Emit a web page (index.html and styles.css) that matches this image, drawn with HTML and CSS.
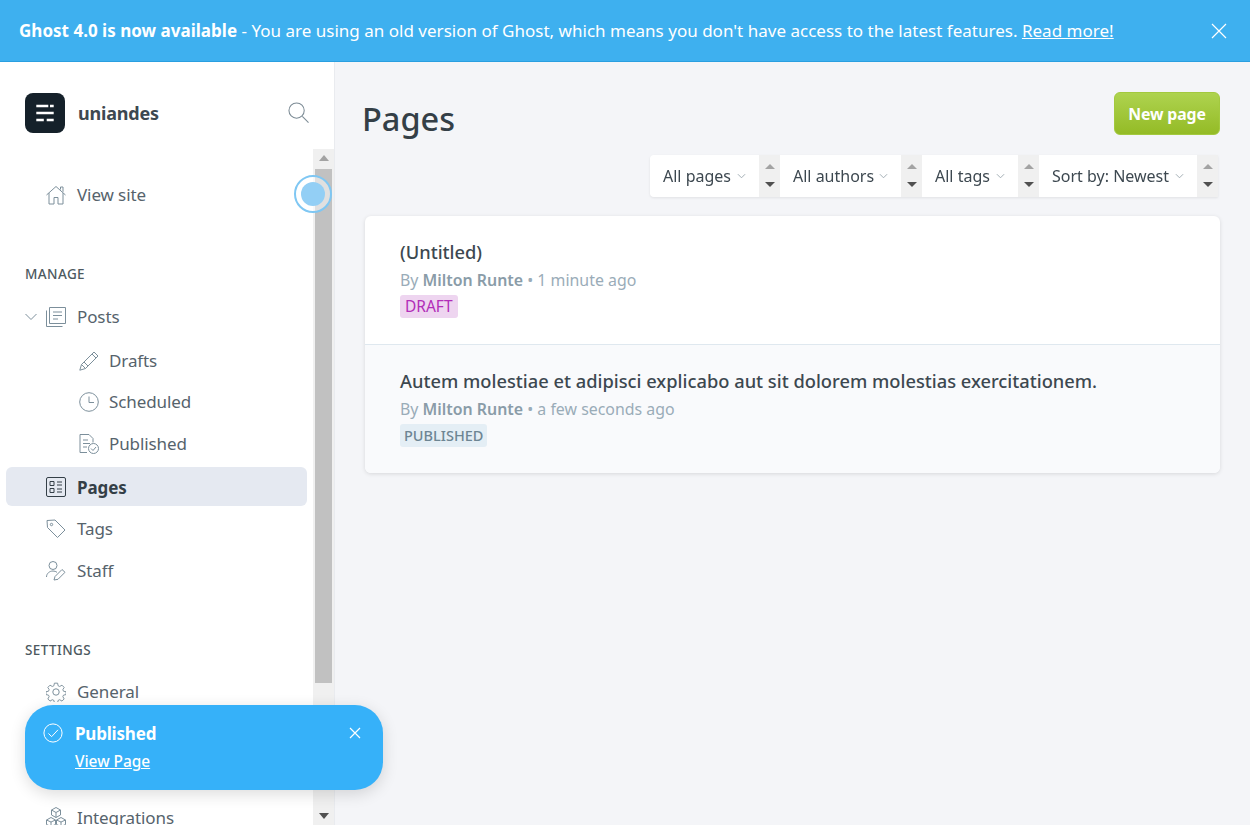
FILE: index.html
```html
<!DOCTYPE html>
<html lang="en">
<head>
<meta charset="utf-8">
<title>Pages - uniandes</title>
<link rel="stylesheet" href="styles.css">
</head>
<body>
<div class="banner">
  <p class="banner-text"><b>Ghost 4.0 is now available</b> - You are using an old version of Ghost, which means you don't have access to the latest features. <a href="#">Read more!</a></p>
  <svg class="banner-close" viewBox="0 0 16 16"><path d="M1 1l14 14M15 1L1 15"/></svg>
</div>
<div class="app">
  <aside class="sidebar">
    <div class="brand">
      <div class="logo"><svg viewBox="0 0 40 40"><path d="M11.300 13h12M25 13h3.700M11.300 20h17.400M11.300 27h7.500M21.700 27h7"/></svg></div>
      <span class="brand-name">uniandes</span>
      <svg class="search" viewBox="0 0 22 22"><circle cx="9" cy="9" r="8"/><path d="M15 15l6.500 6.500"/></svg>
    </div>
    <div class="scroller">
      <nav class="nav">
        <a class="item view-site" href="#"><svg class="icon" viewBox="0 0 20 20"><path d="M.5 10L10 1.500 19.500 10M3 8v11h5v-6.500h4V19h5V8M14.500 4.500V2h2.500v4.800"/></svg>View site</a>
        <h3 class="section manage">MANAGE</h3>
        <a class="item posts" href="#"><svg class="caret" viewBox="0 0 12 8"><path d="M.5 1L6 6.500 11.500 1"/></svg><svg class="icon" viewBox="0 0 20 20"><path d="M3.500.5h16v16h-16zM.5 3.500v16h16M7 5h9M7 8.500h9M7 12h5"/></svg>Posts</a>
        <a class="item sub drafts" href="#"><svg class="icon" viewBox="0 0 20 20"><path d="M15 1l4 4L6.500 17.500.8 19.200 2.500 13.500zM13 3l4 4M2.500 13.500l4 4M5 11l4 4"/></svg>Drafts</a>
        <a class="item sub sched" href="#"><svg class="icon" viewBox="0 0 20 20"><circle cx="10" cy="10" r="9.300"/><path d="M10 4.500V10.500h5"/></svg>Scheduled</a>
        <a class="item sub pub" href="#"><svg class="icon" viewBox="0 0 20 20"><path d="M8 18.500H1V.5h9l4 4v4M4 6h5M4 9.500h7M4 13h4"/><circle cx="14.500" cy="14.500" r="5"/><path d="M12 14.500l2 2 3-3.500"/></svg>Published</a>
        <a class="item active" href="#"><svg class="icon" viewBox="0 0 20 20"><rect x=".5" y=".5" width="19" height="19" rx="1.500"/><path d="M4 4.500h4v4H4zM4 11.500h4v4H4zM11 5h5M11 8h5M11 12h5M11 15h5"/></svg>Pages</a>
        <a class="item tags" href="#"><svg class="icon" viewBox="0 0 20 20"><path d="M1 1.500l8-.5 10 10-7.500 7.500-10-10z"/><circle cx="5.500" cy="5.500" r="1.200"/></svg>Tags</a>
        <a class="item staff" href="#"><svg class="icon" viewBox="0 0 20 20"><circle cx="7" cy="4.500" r="4"/><path d="M.5 16c0-3.500 3-6 6.500-6 1.500 0 3 .5 4 1.300M8 19l1-3.500 7-7 3 2.800-7 7z"/></svg>Staff</a>
        <h3 class="section settings">SETTINGS</h3>
        <a class="item general" href="#"><svg class="icon" viewBox="0 0 20 20"><circle cx="10" cy="10" r="3.200"/><path d="M8.300.7h3.400l.5 2.700 1.700.8 2.400-1.400 2.300 2.400-1.400 2.300.7 1.700 2.700.5v3l-2.700.6-.7 1.600 1.400 2.400-2.300 2.300-2.400-1.500-1.700.8-.5 2.600H8.300l-.5-2.600-1.700-.8-2.400 1.500-2.300-2.300 1.400-2.400-.7-1.600-2.700-.6v-3l2.700-.5.7-1.700-1.400-2.300L3.700 2.800l2.400 1.400 1.700-.8z" transform="translate(.5 .5) scale(.95)"/></svg>General</a>
        <div class="under-toast"></div>
        <a class="item integrations" href="#"><svg class="icon" viewBox="0 0 20 20"><path d="M10 .5l4.500 2.500v5L10 10.500 5.500 8V3zM5.500 3L10 5.500 14.500 3M10 5.500v5M5 10.500l4.500 2.500v4.500L5 19.500.5 17.500V13zM.5 13L5 15l4.500-2M5 15v4.500M15 10.500l4.500 2.500v4.500L15 19.500l-4.500-2V13zM10.500 13l4.500 2 4.500-2M15 15v4.500"/></svg>Integrations</a>
      </nav>
      <div class="scrollbar">
        <svg class="sb-arrow" viewBox="0 0 10 6"><path d="M5 0l5 6H0z"/></svg>
        <div class="sb-thumb"></div>
        <svg class="sb-arrow dark" viewBox="0 0 10 6"><path d="M0 0h10L5 6z"/></svg>
      </div>
    </div>
    <div class="focus-ring"><span></span></div>
  </aside>
  <main class="main">
    <header class="head">
      <h1>Pages</h1>
      <a class="new-page" href="#">New page</a>
    </header>
    <div class="filters">
      <div class="filter f1"><span>All pages</span><svg viewBox="0 0 10 6"><path d="M1 1l4 4 4-4"/></svg></div>
      <div class="spin"><i class="up"></i><i class="down"></i></div>
      <div class="filter f2"><span>All authors</span><svg viewBox="0 0 10 6"><path d="M1 1l4 4 4-4"/></svg></div>
      <div class="spin"><i class="up"></i><i class="down"></i></div>
      <div class="filter f3"><span>All tags</span><svg viewBox="0 0 10 6"><path d="M1 1l4 4 4-4"/></svg></div>
      <div class="spin"><i class="up"></i><i class="down"></i></div>
      <div class="filter f4"><span>Sort by: Newest</span><svg viewBox="0 0 10 6"><path d="M1 1l4 4 4-4"/></svg></div>
      <div class="spin"><i class="up"></i><i class="down"></i></div>
    </div>
    <section class="list">
      <article class="row">
        <h2>(Untitled)</h2>
        <p class="meta">By <b>Milton Runte</b> • 1 minute ago</p>
        <span class="tag draft">DRAFT</span>
      </article>
      <article class="row alt">
        <h2>Autem molestiae et adipisci explicabo aut sit dolorem molestias exercitationem.</h2>
        <p class="meta">By <b>Milton Runte</b> • a few seconds ago</p>
        <span class="tag published">PUBLISHED</span>
      </article>
    </section>
  </main>
</div>
<div class="toast">
  <svg class="toast-check" viewBox="0 0 22 22"><circle cx="11" cy="11" r="10"/><path d="M6 11.500l3.500 3.500 7-7.500"/></svg>
  <div class="toast-body">
    <strong>Published</strong>
    <a href="#">View Page</a>
  </div>
  <svg class="toast-close" viewBox="0 0 12 12"><path d="M1 1l10 10M11 1L1 11"/></svg>
</div>
</body>
</html>
```
FILE: styles.css
```css
* { box-sizing: border-box; }
html, body { margin: 0; height: 100%; overflow: hidden; }
body { font-family: "Noto Sans", "Open Sans", sans-serif; color: #3d4850; background: #f4f5f8; }
a { color: inherit; text-decoration: none; }
svg { fill: none; stroke: currentColor; stroke-width: 1; flex: none; }

.banner { height: 62px; background: #3eb0ef; border-bottom: 1px solid #2a9fe0; color: #fff; display: flex; align-items: center; padding: 0 23px 0 19px; justify-content: space-between; }
.banner-text { margin: 0; font-size: 17px; letter-spacing: .015px; }
.banner-text a { text-decoration: underline; }
.banner-close { width: 16px; height: 16px; stroke-width: 1.200; }

.app { display: flex; height: 763px; }
.sidebar { position: relative; width: 335px; flex: none; background: #fff; border-right: 1px solid #e9ebef; display: flex; flex-direction: column; }
.brand { height: 87px; flex: none; display: flex; align-items: center; padding: 14px 25px 0; }
.logo { width: 40px; height: 40px; border-radius: 8px; background: #15212a; color: #fff; margin-right: 13px; }
.logo svg { display: block; width: 40px; height: 40px; stroke-width: 2.600; }
.brand-name { font-size: 18px; font-weight: 700; color: #3d4850; flex: 1; letter-spacing: -.2px; }
.search { width: 21px; height: 21px; color: #7c8b95; stroke-width: 1.100; }

.scroller { flex: 1; min-height: 0; display: flex; }
.nav { flex: 1; min-width: 0; overflow: hidden; padding: 26px 6px 0; }
.item { display: flex; align-items: center; height: 39px; padding-left: 40px; font-size: 17px; color: #56636c; border-radius: 6px; margin-top: 2.700px; letter-spacing: -.1px; }
.view-site { margin-top: 0; }
.icon { width: 20px; height: 20px; margin-right: 11px; color: #7c8f9b; }
.caret { width: 12px; height: 8px; color: #7c8f9b; position: absolute; left: 25px; }
.sub { padding-left: 73px; }
.sub .icon { margin-right: 10px; }
.posts { margin-top: 0; }
.drafts { margin-top: 5px; }
.sched { margin-top: 2px; }
.pub { margin-top: 3px; }
.active { background: #e5e9f1; color: #343f47; font-weight: 700; margin-top: 4px; padding-top: 1px; }
.active .icon { color: #343f47; }
.tags { margin-top: 3px; }
.staff { margin-top: 3px; }
.section { margin: 0; font-size: 13.500px; font-weight: 500; color: #4d5960; padding-left: 19px; letter-spacing: .4px; line-height: 18px; }
.manage { margin-top: 51px; margin-bottom: 14px; }
.settings { margin-top: 51px; margin-bottom: 13px; }
.under-toast { height: 84px; }

.scrollbar { width: 21px; flex: none; background: #f0f0f0; display: flex; flex-direction: column; align-items: center; justify-content: space-between; position: relative; }
.sb-arrow { width: 10px; height: 6px; fill: #a3a3a3; stroke: none; margin: 6px 0 7px; }
.sb-arrow.dark { fill: #505050; margin: 7px 0 6px; }
.sb-thumb { width: 17px; height: 514px; background: #c1c1c1; margin-bottom: 123px; }

.focus-ring { position: absolute; left: 294px; top: 113px; width: 38px; height: 38px; border-radius: 50%; border: 2px solid #7fc7f3; padding: 5px; background: rgba(255,255,255,.5); }
.focus-ring span { display: block; width: 24px; height: 24px; border-radius: 50%; background: #93cff5; }

.main { flex: 1; min-width: 0; padding: 30px 30px 0 27px; }
.head { display: flex; justify-content: space-between; align-items: flex-start; }
.head h1 { margin: 5px 0 0; font-size: 32.500px; line-height: 44px; font-weight: 500; color: #343f47; }
.new-page { width: 106px; height: 43px; border-radius: 6px; background: linear-gradient(#aed34f, #94bb26); border: 1px solid #a3c93f; color: #fff; font-weight: 700; font-size: 15.800px; display: flex; align-items: center; justify-content: center; letter-spacing: -.1px; }

.filters { display: flex; justify-content: flex-end; margin: 14px 2px 0 0; height: 43px; filter: drop-shadow(0 1px 1px rgba(0,0,0,.08)); }
.filter { display: flex; align-items: center; justify-content: space-between; flex: none; white-space: nowrap; background: #fff; font-size: 16px; color: #3d4850; padding: 0 13px; height: 42px; }
.filter svg { width: 9px; height: 6px; color: #9aa6ad; }
.f1 { width: 109px; border-radius: 4px 0 0 4px; }
.f2 { width: 121px; }
.f3 { width: 96px; }
.f4 { width: 158px; }
.spin { width: 21px; height: 42px; background: #f0f0f0; display: flex; flex-direction: column; align-items: center; justify-content: space-between; padding: 9px 0 10px; }
.spin i { width: 0; height: 0; border-left: 5px solid transparent; border-right: 5px solid transparent; }
.spin .up { border-bottom: 5px solid #a3a3a3; }
.spin .down { border-top: 5px solid #505050; }

.list { margin: 18px 0 0 3px; background: #fff; border-radius: 6px; box-shadow: 0 1px 4px rgba(0,0,0,.12); overflow: hidden; }
.row { height: 128px; padding: 21px 35px 0; }
.row.alt { height: 129px; background: #f9fafc; border-top: 1px solid #dfe8ef; }
.row h2 { margin: 0; font-size: 18.300px; line-height: 30px; font-weight: 500; color: #3d4850; }
.meta { margin: 1px 0 0; font-size: 15.900px; line-height: 24px; color: #9aacb8; }
.meta b { color: #8a9ca8; font-weight: 600; }
.tag { display: inline-block; line-height: 23px; border-radius: 3px; margin-top: 3px; }
.draft { background: #eed5f0; color: #b22db8; font-size: 15.500px; padding: 0 5px; }
.published { background: #e4eef5; color: #6d8593; font-weight: 500; font-size: 14.500px; padding: 0 4px; }

.toast { position: absolute; left: 25px; top: 705px; width: 358px; height: 85px; border-radius: 28px; background: #36b1f9; box-shadow: 0 4px 16px rgba(0,0,0,.14); color: #fff; display: flex; padding: 18px 22px 0 18px; }
.toast-check { width: 20px; height: 20px; margin-right: 12px; stroke-width: 1.100; }
.toast-body { flex: 1; display: flex; flex-direction: column; }
.toast-body strong { font-size: 17px; line-height: 20px; font-weight: 700; letter-spacing: -.2px; margin-top: 1px; }
.toast-body a { font-size: 15.400px; line-height: 20px; margin-top: 8px; text-decoration: underline; font-weight: 500; align-self: flex-start; }
.toast-close { width: 12px; height: 12px; margin: 4px 0 0; stroke-width: 1.200; }
```
